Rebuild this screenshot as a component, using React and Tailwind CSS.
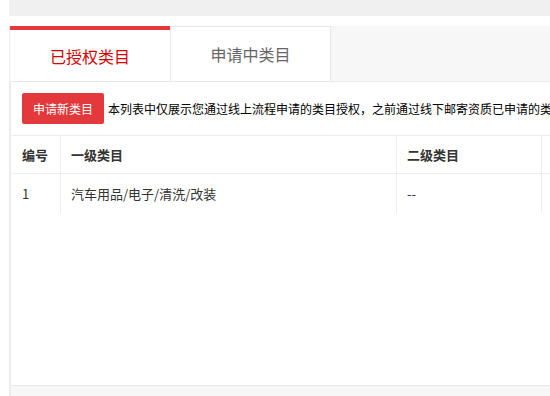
export default function App() {
  const font = { fontFamily: '"Noto Sans CJK SC", "Microsoft YaHei", sans-serif' };
  return (
    <div className="w-[550px] h-[396px] bg-white overflow-hidden flex flex-col" style={font}>
      <div className="ml-[9px] h-[16px] shrink-0 bg-[#f0f0f0]" />
      <div className="ml-[9px] mt-[10px] flex-1 flex flex-col border-l-2 border-[#ececec] min-h-0">
        <div className="h-[56px] shrink-0 flex bg-[#f7f7f7] border-b border-[#e8e8e8]">
          <div className="w-[160px] -ml-[1px] bg-white border-t-4 border-[#e4393c] flex items-center justify-center text-[16px] text-[#d40000]">
            已授权类目
          </div>
          <div className="w-[161px] bg-white border-t border-l border-r border-[#e8e8e8] flex items-center justify-center text-[16px] text-[#666]">
            申请中类目
          </div>
        </div>
        <div className="flex-1 flex flex-col bg-white min-h-0">
          <div className="flex items-center pl-[11px] pt-[11px] pb-[11px] whitespace-nowrap overflow-hidden">
            <button className="h-[31px] w-[82px] shrink-0 rounded-[2px] bg-[#e4393c] text-white text-[12px] flex items-center justify-center">
              申请新类目
            </button>
            <span className="ml-[4px] text-[12px] text-black">
              本列表中仅展示您通过线上流程申请的类目授权，之前通过线下邮寄资质已申请的类目授权不在此展示
            </span>
          </div>
          <div className="ml-[1px] border-t border-[#ececec]">
            <div className="flex h-[38px] border-b border-[#ececec] text-[13px] text-[#333] font-bold">
              <div className="w-[49px] shrink-0 pl-[10px] flex items-center border-r border-[#ececec]">编号</div>
              <div className="w-[336px] shrink-0 pl-[10px] flex items-center border-r border-[#ececec]">一级类目</div>
              <div className="w-[145px] shrink-0 pl-[10px] flex items-center border-r border-[#ececec]">二级类目</div>
              <div className="flex-1" />
            </div>
            <div className="flex h-[39px] text-[13px] text-[#333]">
              <div className="w-[49px] shrink-0 pl-[10px] flex items-center border-r border-[#ececec]">1</div>
              <div className="w-[336px] shrink-0 pl-[10px] flex items-center border-r border-[#ececec]">汽车用品/电子/清洗/改装</div>
              <div className="w-[145px] shrink-0 pl-[10px] flex items-center border-r border-[#ececec]">--</div>
              <div className="flex-1" />
            </div>
          </div>
          <div className="flex-1" />
          <div className="h-[11px] shrink-0 border-t border-[#e8e8e8] bg-[#f7f7f7]" />
        </div>
      </div>
    </div>
  );
}
